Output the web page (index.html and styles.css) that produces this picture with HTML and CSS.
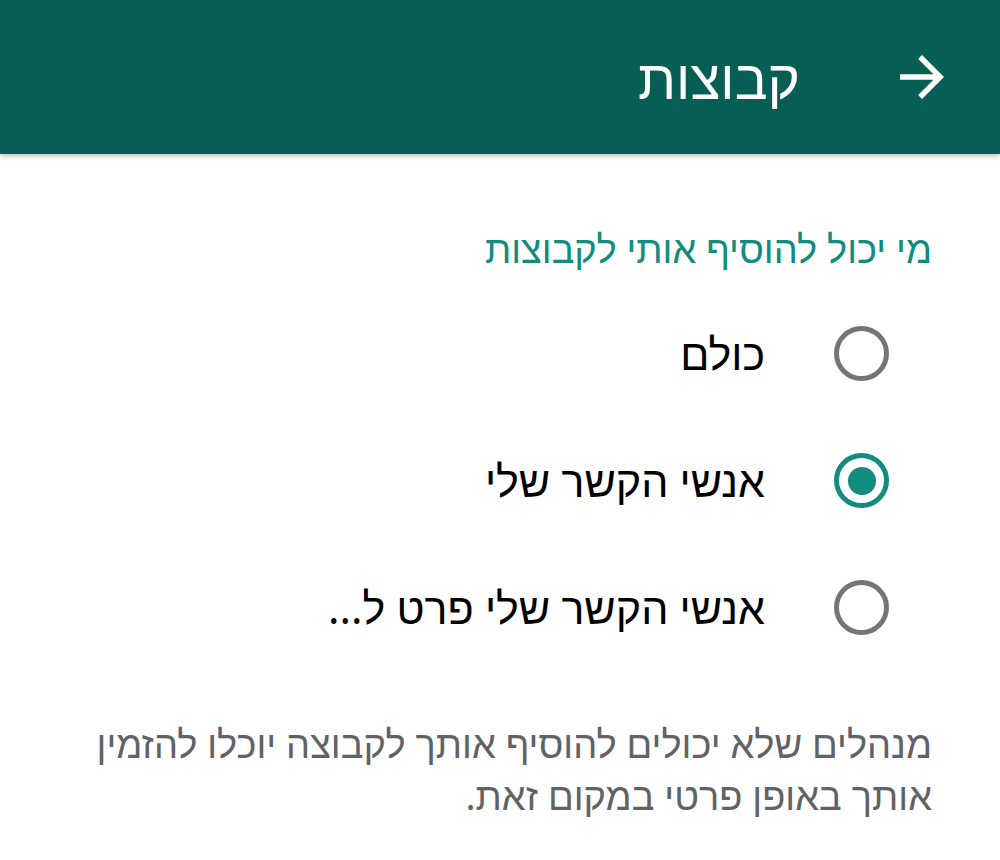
FILE: index.html
```html
<!DOCTYPE html>
<html lang="he" dir="rtl">
<head>
  <meta charset="UTF-8">
  <meta name="viewport" content="width=device-width, initial-scale=1.0">
  <title>קבוצות</title>
  <link rel="stylesheet" href="styles.css">
</head>
<body>
  <header class="topbar">
    <svg class="back" viewBox="0 0 24 24" width="66" height="66">
      <path d="M12 4l-1.41 1.41L16.17 11H4v2h12.17l-5.58 5.59L12 20l8-8z" fill="#ffffff"/>
    </svg>
    <h1>קבוצות</h1>
  </header>

  <main class="content">
    <h2 class="section-title">מי יכול להוסיף אותי לקבוצות</h2>

    <ul class="options">
      <li class="option">
        <span class="radio"></span>
        <span class="label">כולם</span>
      </li>
      <li class="option">
        <span class="radio checked"></span>
        <span class="label">אנשי הקשר שלי</span>
      </li>
      <li class="option">
        <span class="radio"></span>
        <span class="label">אנשי הקשר שלי פרט ל...</span>
      </li>
    </ul>

    <p class="note">מנהלים שלא יכולים להוסיף אותך לקבוצה יוכלו להזמין אותך באופן פרטי במקום זאת.</p>
  </main>
</body>
</html>
```

FILE: styles.css
```css
* {
  box-sizing: border-box;
}
body {
  margin: 0;
  background-color: #ffffff;
  font-family: 'Noto Sans', 'Liberation Sans', 'DejaVu Sans', sans-serif;
  direction: rtl;
}
.topbar {
  height: 154px;
  background-color: #075e54;
  display: flex;
  align-items: center;
  gap: 89px;
  padding-right: 45px;
  box-shadow: 0 2px 5px rgba(0, 0, 0, 0.25);
  position: relative;
}
.back {
  display: block;
}
.topbar h1 {
  margin: 0;
  color: #ffffff;
  font-size: 55px;
  font-weight: 400;
}
.content {
  padding: 0 68px;
}
.section-title {
  margin: 70px 0 0;
  color: #128c7e;
  font-size: 38px;
  font-weight: 400;
  line-height: 48px;
}
.options {
  list-style: none;
  margin: 18px 0 0;
  padding: 0 43px 0 0;
}
.option {
  display: flex;
  align-items: center;
  gap: 69px;
  height: 127px;
}
.radio {
  width: 55px;
  height: 55px;
  border: 5px solid #757575;
  border-radius: 50%;
  display: flex;
  align-items: center;
  justify-content: center;
  flex-shrink: 0;
}
.radio.checked {
  border-color: #128c7e;
}
.radio.checked::after {
  content: "";
  width: 28px;
  height: 28px;
  border-radius: 50%;
  background-color: #128c7e;
}
.label {
  color: #000000;
  font-size: 43px;
}
.note {
  margin: 46px 0 0;
  color: #5f6368;
  font-size: 38px;
  line-height: 52px;
}
```
